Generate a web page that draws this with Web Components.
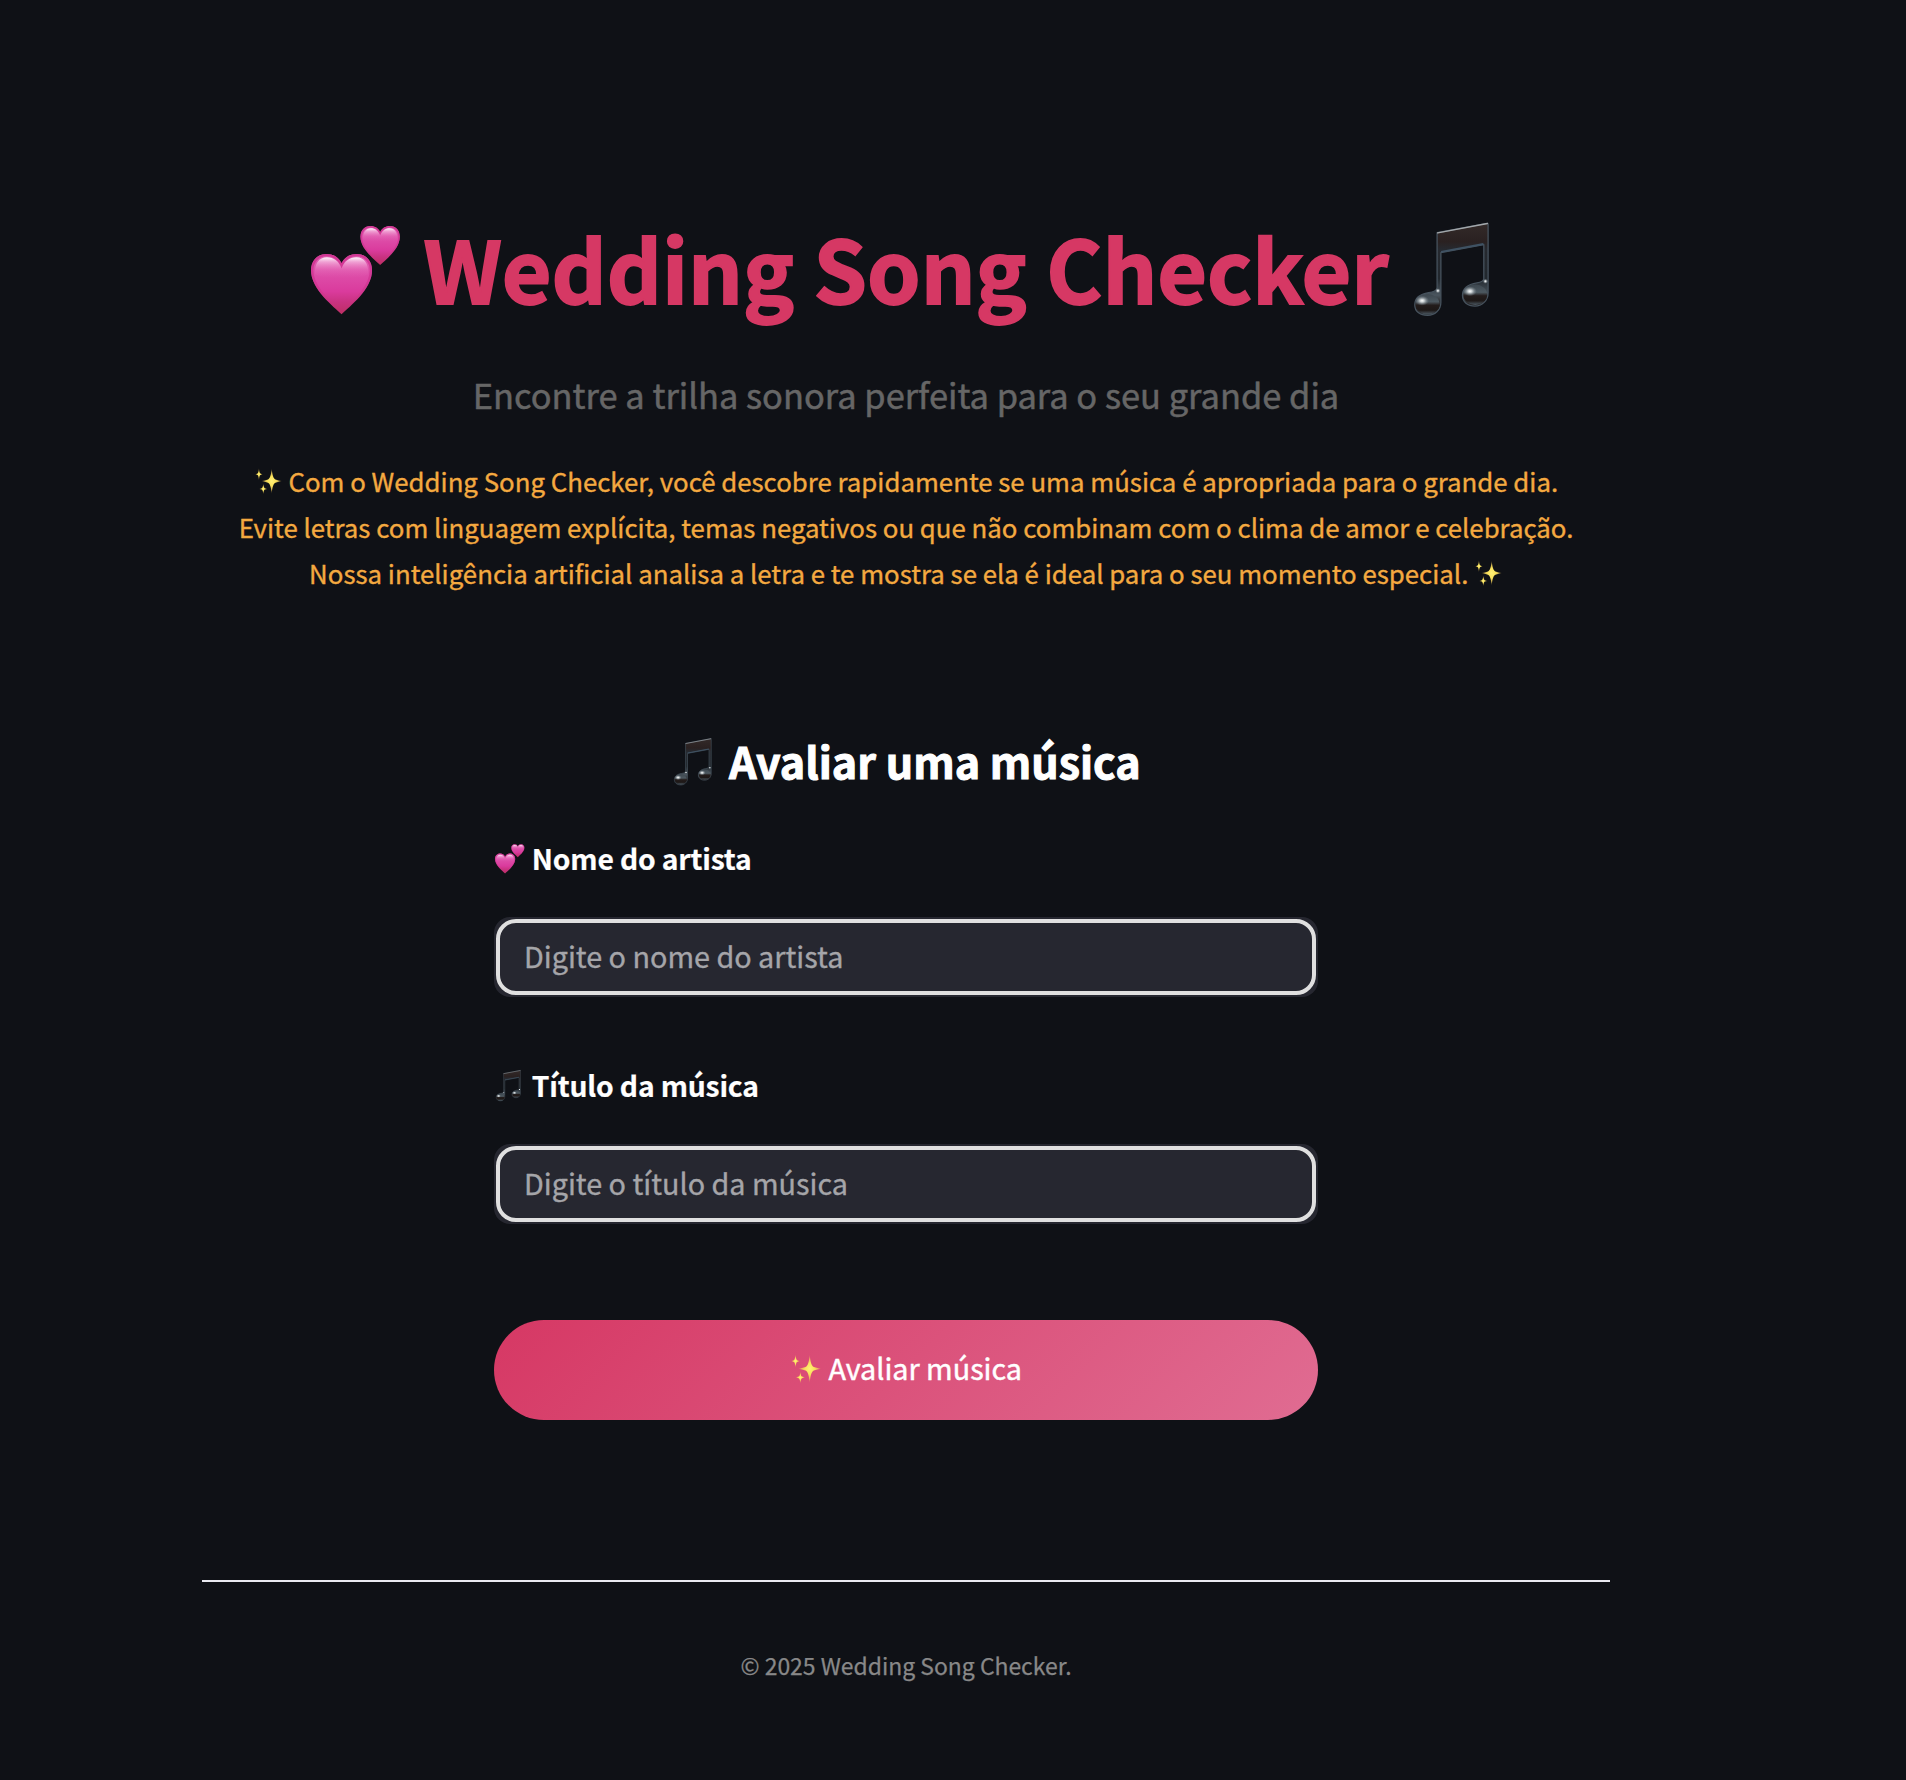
<!DOCTYPE html>
<html lang="pt-BR">
<head>
<meta charset="utf-8">
<title>Wedding Song Checker</title>
<style>
  html, body { margin: 0; background: #0f1116; }
  body { min-height: 1780px; font-family: "Noto Sans CJK JP", "Noto Sans", sans-serif; color: #fafafa; }
</style>
</head>
<body>
<song-app></song-app>

<template id="t-app">
  <style>
    :host { display: flex; flex-direction: column; width: 1408px; margin-left: 202px; padding-top: 210px; -webkit-text-stroke: .35px; }
    form-field + form-field { margin-top: 64px; }
  </style>
  <page-hero>
    <span slot="title"><emoji-icon name="hearts"></emoji-icon> Wedding Song Checker <emoji-icon name="notes"></emoji-icon></span>
    <span slot="subtitle">Encontre a trilha sonora perfeita para o seu grande dia</span>
    <span slot="text"><emoji-icon name="sparkles"></emoji-icon> Com o Wedding Song Checker, você descobre rapidamente se uma música é apropriada para o grande dia.<br>Evite letras com linguagem explícita, temas negativos ou que não combinam com o clima de amor e celebração.<br>Nossa inteligência artificial analisa a letra e te mostra se ela é ideal para o seu momento especial. <emoji-icon name="sparkles"></emoji-icon></span>
  </page-hero>
  <song-form>
    <span slot="heading"><emoji-icon name="notes"></emoji-icon> Avaliar uma música</span>
    <form-field placeholder="Digite o nome do artista"><emoji-icon name="hearts"></emoji-icon> Nome do artista</form-field>
    <form-field placeholder="Digite o título da música"><emoji-icon name="notes"></emoji-icon> Título da música</form-field>
    <submit-button slot="action"><emoji-icon name="sparkles"></emoji-icon> Avaliar música</submit-button>
  </song-form>
  <page-footer>© 2025 Wedding Song Checker.</page-footer>
</template>

<template id="t-hero">
  <style>
    :host { display: block; text-align: center; white-space: nowrap; }
    h1, p { margin: 0; }
    h1 { font-size: 85.7px; line-height: 115px; font-weight: 700; color: #d63864; -webkit-text-stroke: 1.8px; }
    .sub { margin-top: 41px; font-size: 34.44px; line-height: 56px; color: #666; -webkit-text-stroke: .5px; }
    .text { margin-top: 36px; font-size: 25.81px; line-height: 46px; color: #f4a940; }
  </style>
  <h1><slot name="title"></slot></h1>
  <p class="sub"><slot name="subtitle"></slot></p>
  <p class="text"><slot name="text"></slot></p>
</template>

<template id="t-form">
  <style>
    :host { display: flex; flex-direction: column; width: 824px; margin: 135px auto 0; }
    h2 { margin: 0 0 45px; text-align: center; font-size: 43.03px; line-height: 58px; font-weight: 700; color: #fff; -webkit-text-stroke: 1px; }
    .action { margin-top: 96px; }
  </style>
  <h2><slot name="heading"></slot></h2>
  <slot></slot>
  <div class="action"><slot name="action"></slot></div>
</template>

<template id="t-field">
  <style>
    :host { display: block; }
    label { display: block; font-size: 28.3px; line-height: 48px; font-weight: 700; letter-spacing: -.18px; color: #fff; white-space: nowrap; -webkit-text-stroke: .2px; }
    .box { box-sizing: border-box; height: 80px; margin-top: 35px; padding: 2px; border-radius: 16px; background: #262730; overflow: hidden; display: flex; }
    input { flex: 1; min-width: 0; box-sizing: border-box; border: 4px solid #e0e0e0; border-radius: 20px; background: #262730; color: #fafafa; padding: 0 24px 3px; font: 400 28.75px "Noto Sans CJK JP", "Noto Sans", sans-serif; outline: none; }
    input::placeholder { color: #a5a5a9; opacity: 1; }
  </style>
  <label><slot></slot></label>
  <div class="box"><input type="text"></div>
</template>

<template id="t-button">
  <style>
    :host { display: block; }
    button { display: block; width: 100%; height: 100px; box-sizing: border-box; padding: 0 0 5px; border: 0; border-radius: 50px; background: linear-gradient(135deg, #d63864, #e06c92); color: #fff; font: 400 28.75px "Noto Sans CJK JP", "Noto Sans", sans-serif; -webkit-text-stroke: .45px; }
  </style>
  <button type="button"><slot></slot></button>
</template>

<template id="t-footer">
  <style>
    :host { display: block; margin-top: 160px; border-top: 2px solid #eaeaf1; padding-top: 63px; text-align: center; font-size: 22.93px; line-height: 40px; color: #888; -webkit-text-stroke: .25px; }
  </style>
  <slot></slot>
</template>

<script>
const ICONS = {
  hearts: `
    <defs>
      <linearGradient id="body" x1="0" y1="0" x2="0" y2="1">
        <stop offset="0" stop-color="#e060b2"/><stop offset=".3" stop-color="#de50aa"/><stop offset=".62" stop-color="#da3b9d"/><stop offset=".8" stop-color="#c93280"/><stop offset="1" stop-color="#bd2f63"/>
      </linearGradient>
      <linearGradient id="rim" x1="0" y1="0" x2="0" y2="1">
        <stop offset="0" stop-color="#cf2f8e" stop-opacity=".85"/><stop offset=".5" stop-color="#cf2f8e" stop-opacity=".6"/><stop offset=".8" stop-color="#bd2f63" stop-opacity="0"/>
      </linearGradient>
      <linearGradient id="shine" x1="0" y1="0" x2="0" y2="1">
        <stop offset="0" stop-color="#fff" stop-opacity=".95"/><stop offset=".22" stop-color="#fbd0ec" stop-opacity=".6"/><stop offset=".6" stop-color="#f08aca" stop-opacity=".25"/><stop offset="1" stop-color="#e060b2" stop-opacity="0"/>
      </linearGradient>
      <g id="heart">
        <path fill="url(#body)" d="M33.7 92.7C26 85 3 68 3 48.5 3 39 9.5 32 18.5 32c7 0 12.500 3.500 15.200 9.500C36.500 35.500 42 32 49 32c9 0 15.300 7 15.300 16.500C64.300 68 41.500 85 33.700 92.700Z"/>
        <path fill="none" stroke="url(#rim)" stroke-width="2.400" d="M33.700 91C26 83.500 4.200 67 4.200 48.500c0-8.800 6-15.300 14.300-15.300 6.800 0 12.200 3.700 15.200 10.300C36.700 36.900 42.200 33.200 49 33.200c8.300 0 14.100 6.500 14.100 15.300C63.100 67 41.400 83.500 33.700 91Z"/>
        <path fill="url(#shine)" d="M7 52c-.5-10 4-16.500 12-16.500 7 0 12 4 14.700 11.500C36.400 39.500 41.500 35.500 48.500 35.500c8 0 12.500 6.500 12 16.500-4 6-50 6-53.500 0Z"/>
      </g>
    </defs>
    <use href="#heart"/>
    <use href="#heart" transform="translate(50.700 -16.600) scale(.645)"/>`,
  notes: `
    <defs>
      <linearGradient id="metal" x1="0" y1="0" x2="0" y2="1">
        <stop offset="0" stop-color="#332a29"/><stop offset=".2" stop-color="#2a2121"/><stop offset=".28" stop-color="#26292f"/><stop offset=".6" stop-color="#22282e"/><stop offset=".78" stop-color="#4a555e"/><stop offset=".9" stop-color="#201b1b"/><stop offset="1" stop-color="#30373d"/>
      </linearGradient>
      <linearGradient id="ball" x1="0" y1="0" x2="0" y2="1">
        <stop offset="0" stop-color="#3d474f"/><stop offset=".38" stop-color="#4d5961"/><stop offset=".55" stop-color="#231c1b"/><stop offset=".8" stop-color="#1d1817"/><stop offset="1" stop-color="#4b5862"/>
      </linearGradient>
      <radialGradient id="glint">
        <stop offset="0" stop-color="#fff"/><stop offset=".3" stop-color="#dfe4e6" stop-opacity=".85"/><stop offset="1" stop-color="#7a858c" stop-opacity="0"/>
      </radialGradient>
    </defs>
    <g transform="translate(1.200 0)">
      <path fill="url(#metal)" stroke="#46525d" stroke-width="1.300" stroke-linejoin="round" d="M28 10.800 78 1.300Q79.200 1 79.200 2.500V71c0 8-6.200 13.400-13.200 13.400-7.500 0-12.500-4.200-12.500-10.600 0-7.800 6.500-11.300 14.500-12.600 4-.7 6.600-1.700 6.900-4.200V22.700L31.800 30.700V80.500c0 8-6.300 13.300-13.300 13.300-8 0-12.900-4.200-12.900-10.600 0-7.700 6.400-11 13.900-12.200 5-.8 8.200-2 8.500-5Z"/>
      <ellipse cx="18.500" cy="82.500" rx="12" ry="10.200" fill="url(#ball)"/>
      <ellipse cx="66.300" cy="73" rx="12" ry="10.200" fill="url(#ball)"/>
      <path d="M28.500 11 78.500 1.500" stroke="#a3a7aa" stroke-width="1.300" stroke-linecap="round"/>
      <path d="M32 30 74.500 22" stroke="#3f5263" stroke-width="2"/>
      <ellipse cx="13" cy="79" rx="7" ry="5" fill="url(#glint)"/>
      <ellipse cx="61" cy="69.500" rx="7" ry="5" fill="url(#glint)"/>
      <circle cx="28.800" cy="69" r="2.600" fill="url(#glint)"/>
      <circle cx="76.500" cy="59.500" r="2.600" fill="url(#glint)"/>
    </g>`,
  sparkles: `
    <defs>
      <radialGradient id="gold">
        <stop offset="0" stop-color="#fff078"/><stop offset=".4" stop-color="#fae25c"/><stop offset=".7" stop-color="#f3cf5a" stop-opacity=".8"/><stop offset="1" stop-color="#eec35a" stop-opacity=".15"/>
      </radialGradient>
      <path id="star" fill="url(#gold)" d="M0-1C.06-.45.18-.2.36-.13.58-.07.8-.04 1 0 .8.04.58.07.36.13.18.2.06.45 0 1-.06.45-.18.2-.36.13-.58.07-.8.04-1 0-.8-.04-.58-.07-.36-.13-.18-.2-.06-.45 0-1Z"/>
    </defs>
    <use href="#star" transform="translate(59 47) scale(34 42)"/>
    <use href="#star" transform="translate(16.500 24) scale(13 20)"/>
    <use href="#star" transform="translate(31 73) scale(14 18)"/>`
};

class EmojiIcon extends HTMLElement {
  connectedCallback() {
    if (this.shadowRoot) return;
    this.attachShadow({ mode: 'open' }).innerHTML = `
      <style>
        :host { display: inline-block; width: 1.116em; height: 1.116em; vertical-align: -.165em; line-height: 0; }
        svg { display: block; width: 100%; height: 100%; overflow: visible; }
      </style>
      <svg viewBox="0 0 96 96" aria-hidden="true">${ICONS[this.getAttribute('name')]}</svg>`;
  }
}

const define = (tag, templateId, setup) => customElements.define(tag, class extends HTMLElement {
  connectedCallback() {
    if (this.shadowRoot) return;
    const root = this.attachShadow({ mode: 'open' });
    root.append(document.getElementById(templateId).content.cloneNode(true));
    if (setup) setup(this, root);
  }
});

customElements.define('emoji-icon', EmojiIcon);
define('page-hero', 't-hero');
define('form-field', 't-field', (host, root) => {
  root.querySelector('input').placeholder = host.getAttribute('placeholder');
});
define('submit-button', 't-button');
define('song-form', 't-form');
define('page-footer', 't-footer');
define('song-app', 't-app');
</script>
</body>
</html>
